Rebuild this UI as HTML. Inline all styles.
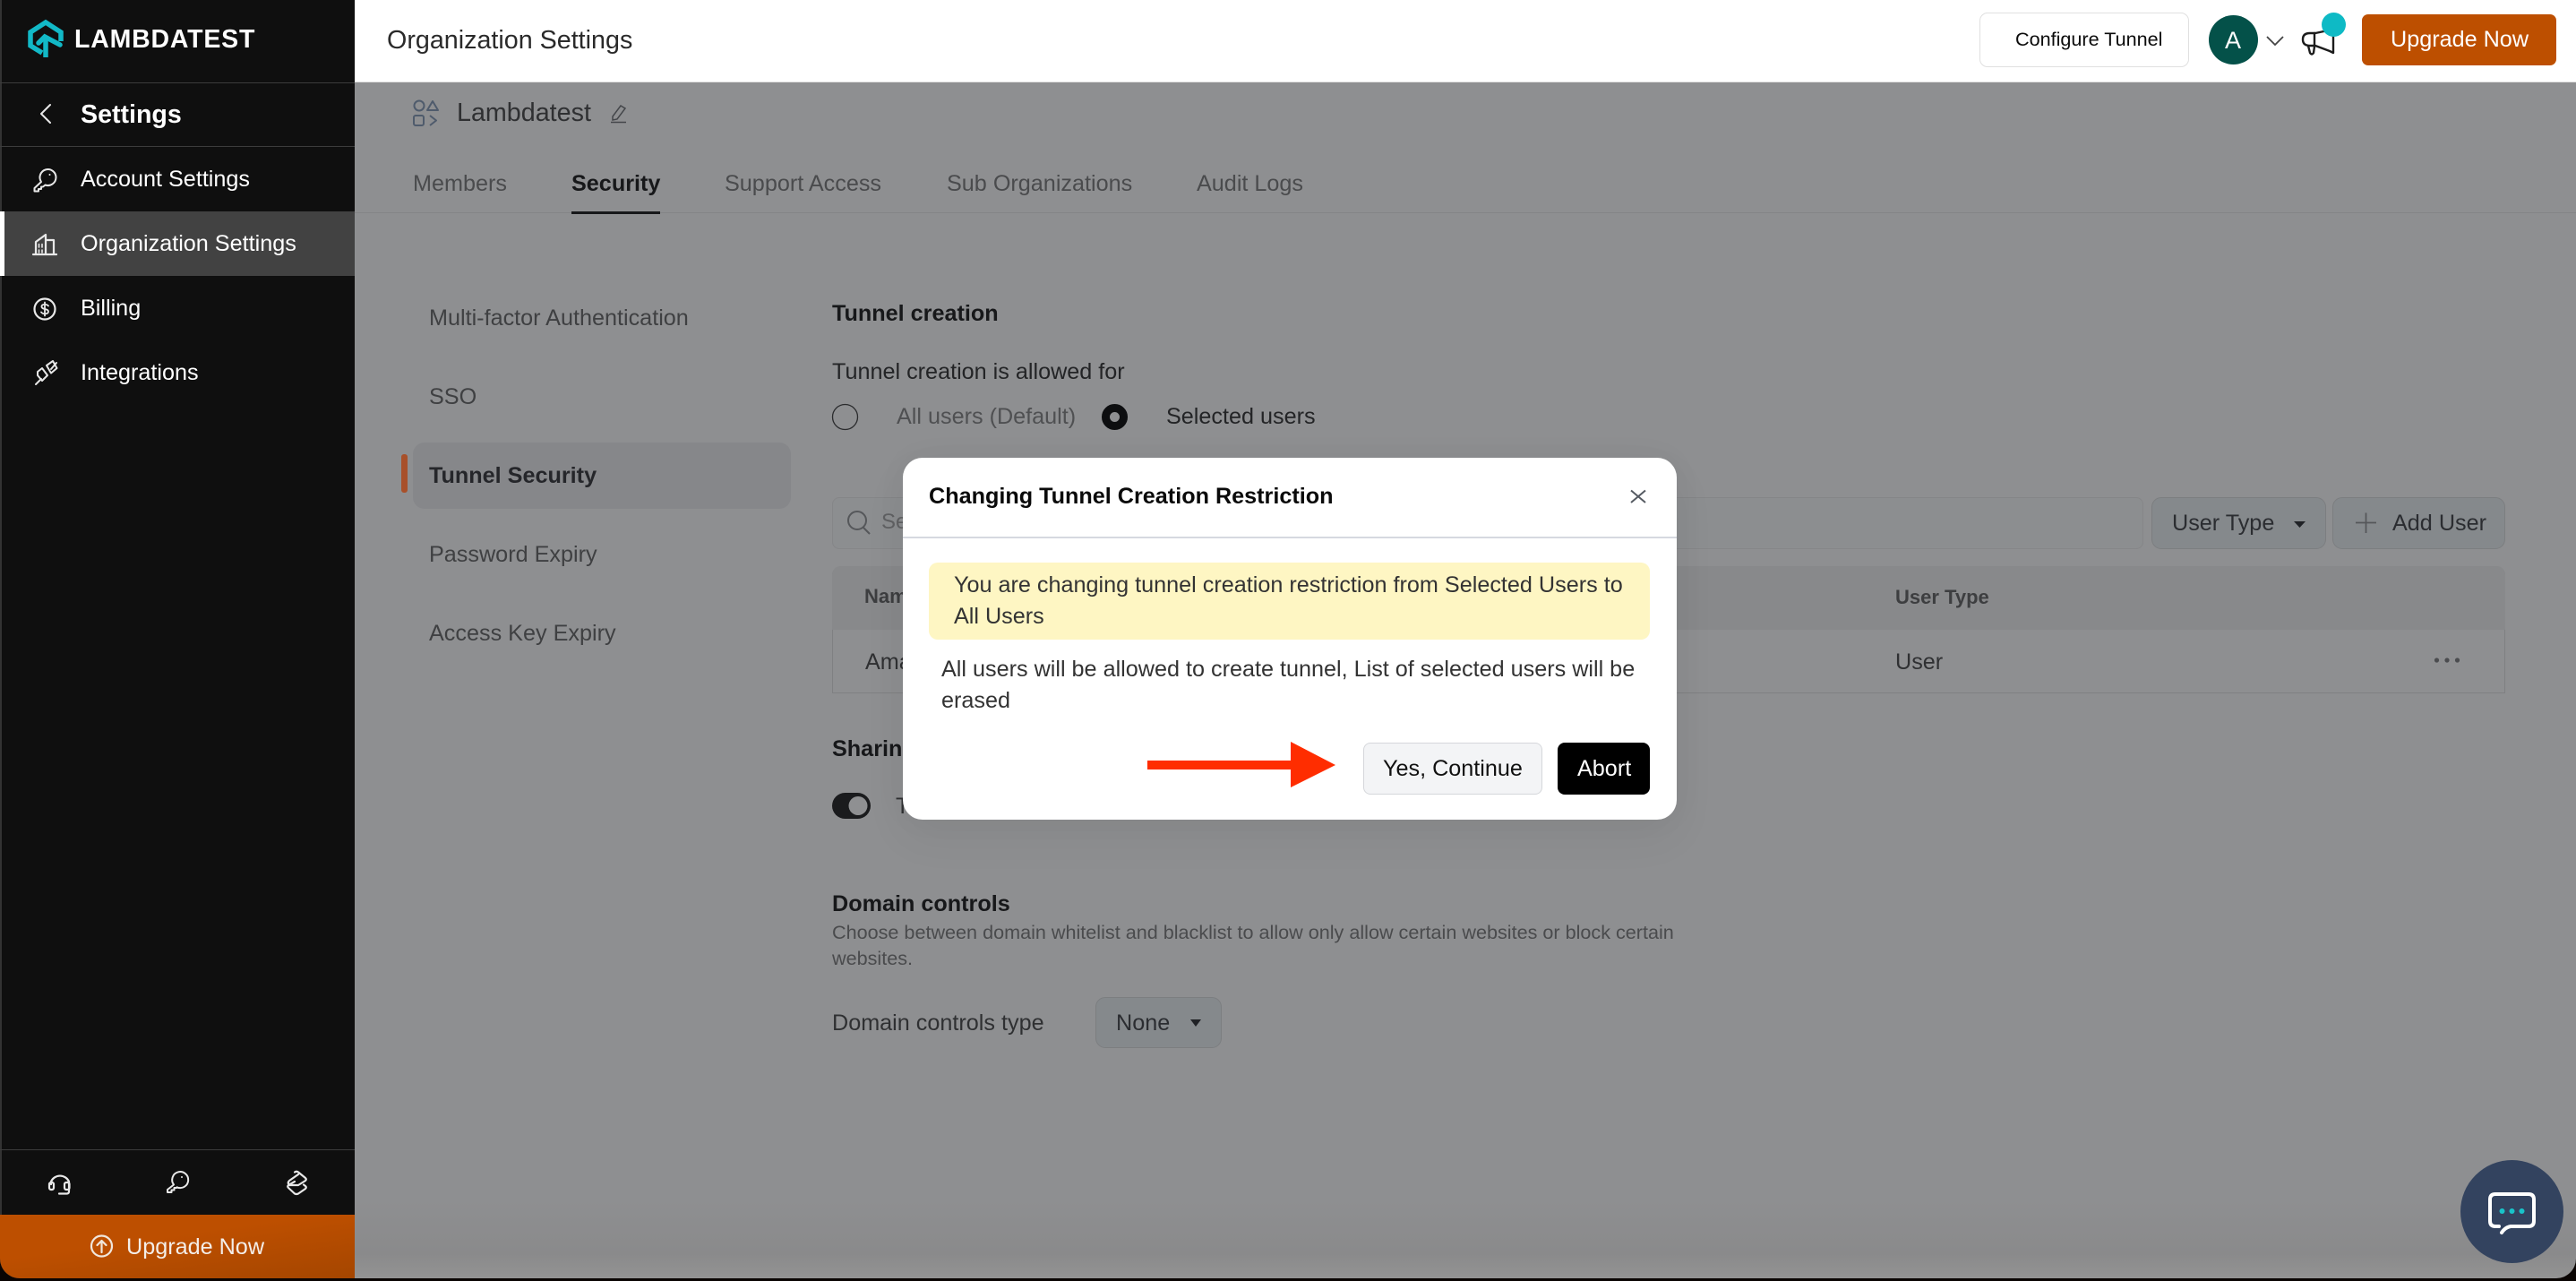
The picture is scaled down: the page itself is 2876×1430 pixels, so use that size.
<!DOCTYPE html>
<html lang="en">
<head>
<meta charset="utf-8">
<title>Organization Settings</title>
<style>
*{box-sizing:border-box}
html,body{margin:0;padding:0;width:2876px;height:1430px;overflow:hidden;background:#0a0503;font-family:"Liberation Sans",Arial,sans-serif}
#win{position:absolute;left:0;top:0;width:2876px;height:1427px;border-radius:0 0 22px 22px;overflow:hidden;background:linear-gradient(#8e8f91 0,#8e8f91 1340px,#8a8a8b 1400px,#939393 1427px)}
.b{position:absolute}
.t{position:absolute;white-space:nowrap;line-height:40px;height:40px;font-size:25.2px;color:#37383a}
.bd{font-weight:700}
.w{color:#fff}
svg{position:absolute;left:0;top:0;z-index:20;pointer-events:none}
#modal{position:absolute;left:1008px;top:511px;width:864px;height:404px;background:#fff;border-radius:22px;box-shadow:0 20px 50px rgba(0,0,0,.05),0 0 40px rgba(0,0,0,.03);z-index:10}
</style>
</head>
<body>
<div id="win">
  <!-- sidebar -->
  <div class="b" style="left:0;top:0;width:396px;height:1427px;background:#0f0f0f"></div>
  <div class="b" style="left:0;top:0;width:2px;height:1427px;background:#333"></div>
  <div class="b" style="left:0;top:92px;width:396px;height:1px;background:#3c3c3c"></div>
  <div class="b" style="left:0;top:163px;width:396px;height:1px;background:#3c3c3c"></div>
  <div class="b" style="left:0;top:236px;width:396px;height:72px;background:#424242"></div>
  <div class="b" style="left:0;top:236px;width:5px;height:72px;background:#fff"></div>
  <div class="b" style="left:0;top:1283px;width:396px;height:1px;background:#3c3c3c"></div>
  <div class="b" style="left:0;top:1356px;width:396px;height:71px;background:linear-gradient(172deg,#bd4f00 40%,#a54600 100%)"></div>

  <span class="t bd w" style="left:83px;top:24px;font-size:28.5px;letter-spacing:.8px">LAMBDATEST</span>
  <span class="t bd w" style="left:90px;top:108px;font-size:28.6px">Settings</span>
  <span class="t w" style="left:90px;top:180px">Account Settings</span>
  <span class="t w" style="left:90px;top:252px">Organization Settings</span>
  <span class="t w" style="left:90px;top:324px">Billing</span>
  <span class="t w" style="left:90px;top:396px">Integrations</span>
  <span class="t" style="left:141px;top:1372px;color:#f4eee9">Upgrade Now</span>

  <!-- header -->
  <div class="b" style="left:396px;top:0;width:2480px;height:92px;background:#fff;border-bottom:1px solid #e2e2e2"></div>
  <span class="t" style="left:432px;top:25px;font-size:28.7px;color:#2a2a2a">Organization Settings</span>
  <div class="b" style="left:2210px;top:14px;width:234px;height:61px;border:1px solid #e0e0e0;border-radius:9px;background:#fff"></div>
  <span class="t" style="left:2250px;top:24px;font-size:21.6px;color:#0c0c0c">Configure Tunnel</span>
  <div class="b" style="left:2466px;top:17px;width:55px;height:55px;border-radius:50%;background:#045149"></div>
  <span class="t w" style="left:2484px;top:25px;font-size:27px">A</span>
  <div class="b" style="left:2637px;top:16px;width:217px;height:57px;border-radius:7px;background:#bd4f00"></div>
  <span class="t w" style="left:2669px;top:24px">Upgrade Now</span>

  <!-- org row -->
  <span class="t" style="left:510px;top:106px;font-size:28.7px;color:#2f3032">Lambdatest</span>

  <!-- tabs -->
  <div class="b" style="left:396px;top:237px;width:2480px;height:1px;background:#838486"></div>
  <div class="b" style="left:638px;top:236px;width:99px;height:3px;background:#17181a"></div>
  <span class="t" style="left:461px;top:185px;color:#4a4b4d">Members</span>
  <span class="t bd" style="left:638px;top:185px;color:#17181a">Security</span>
  <span class="t" style="left:809px;top:185px;color:#4a4b4d">Support Access</span>
  <span class="t" style="left:1057px;top:185px;color:#4a4b4d">Sub Organizations</span>
  <span class="t" style="left:1336px;top:185px;color:#4a4b4d">Audit Logs</span>

  <!-- left nav -->
  <div class="b" style="left:461px;top:494px;width:422px;height:74px;border-radius:13px;background:#86878a"></div>
  <div class="b" style="left:448px;top:507px;width:7px;height:43px;border-radius:3px;background:#a8502a"></div>
  <span class="t" style="left:479px;top:335px;color:#3f4042">Multi-factor Authentication</span>
  <span class="t" style="left:479px;top:423px;color:#3f4042">SSO</span>
  <span class="t bd" style="left:479px;top:511px;color:#25262a">Tunnel Security</span>
  <span class="t" style="left:479px;top:599px;color:#3f4042">Password Expiry</span>
  <span class="t" style="left:479px;top:687px;color:#3f4042">Access Key Expiry</span>

  <!-- tunnel creation -->
  <span class="t bd" style="left:929px;top:330px;color:#17181a">Tunnel creation</span>
  <span class="t" style="left:929px;top:395px;color:#232426">Tunnel creation is allowed for</span>
  <span class="t" style="left:1001px;top:445px;color:#4f5052">All users (Default)</span>
  <span class="t" style="left:1302px;top:445px;color:#232426">Selected users</span>

  <!-- search and buttons -->
  <div class="b" style="left:929px;top:555px;width:1464px;height:58px;border:1px solid #858688;border-radius:8px;background:#8c8e90"></div>
  <span class="t" style="left:984px;top:563px;font-size:24px;color:#606163">Search</span>
  <div class="b" style="left:2402px;top:555px;width:195px;height:58px;border:1px solid #7c7e80;border-radius:11px;background:#85898c"></div>
  <span class="t" style="left:2425px;top:564px;color:#2b2d31">User Type</span>
  <div class="b" style="left:2604px;top:555px;width:193px;height:58px;border:1px solid #7c7e80;border-radius:11px;background:#85898c"></div>
  <span class="t" style="left:2671px;top:564px;color:#2b2d31">Add User</span>

  <!-- table -->
  <div class="b" style="left:929px;top:632px;width:1868px;height:142px;border:1px solid #7f8082;border-top:0;border-radius:10px 10px 0 0;background:#8e8f91"></div>
  <div class="b" style="left:929px;top:632px;width:1868px;height:71px;border-radius:10px 10px 0 0;background:#88898b"></div>
  <span class="t bd" style="left:965px;top:646px;font-size:22px;color:#3d3e40">Name</span>
  <span class="t" style="left:966px;top:719px;color:#2f3032">Amar</span>
  <span class="t bd" style="left:2116px;top:647px;font-size:22px;color:#3d3e40">User Type</span>
  <span class="t" style="left:2116px;top:719px;color:#2f3032">User</span>

  <!-- sharing -->
  <span class="t bd" style="left:929px;top:816px;color:#17181a">Sharing</span>
  <span class="t" style="left:1000px;top:880px;color:#2f3032">Tunnel</span>

  <!-- domain -->
  <span class="t bd" style="left:929px;top:989px;color:#17181a">Domain controls</span>
  <span class="t" style="left:929px;top:1021px;font-size:21.6px;color:#4a4b4d">Choose between domain whitelist and blacklist to allow only allow certain websites or block certain</span>
  <span class="t" style="left:929px;top:1050px;font-size:21.6px;color:#4a4b4d">websites.</span>
  <span class="t" style="left:929px;top:1122px;color:#2f3032">Domain controls type</span>
  <div class="b" style="left:1223px;top:1113px;width:141px;height:57px;border:1px solid #7c7e80;border-radius:11px;background:#85898c"></div>
  <span class="t" style="left:1246px;top:1122px;color:#2b2d31">None</span>

  <!-- modal -->
  <div id="modal">
    <div class="b" style="left:0;top:88px;width:864px;height:2px;background:#d6d9e0"></div>
    <div class="b" style="left:29px;top:117px;width:805px;height:86px;border-radius:10px;background:#fef6c3"></div>
    <span class="t bd" style="left:29px;top:23px;color:#0a0a0a">Changing Tunnel Creation Restriction</span>
    <span class="t" style="left:57px;top:122px;color:#333">You are changing tunnel creation restriction from Selected Users to</span>
    <span class="t" style="left:57px;top:157px;color:#333">All Users</span>
    <span class="t" style="left:43px;top:216px;color:#333">All users will be allowed to create tunnel, List of selected users will be</span>
    <span class="t" style="left:43px;top:251px;color:#333">erased</span>
    <div class="b" style="left:514px;top:318px;width:200px;height:58px;border:1px solid #d5d7db;border-radius:8px;background:#f3f4f6"></div>
    <span class="t" style="left:536px;top:327px;color:#111">Yes, Continue</span>
    <div class="b" style="left:731px;top:318px;width:103px;height:58px;border-radius:8px;background:#000"></div>
    <span class="t w" style="left:753px;top:327px">Abort</span>
  </div>

  <!-- chat -->
  <div class="b" style="left:2747px;top:1295px;width:115px;height:115px;border-radius:50%;background:#33435f;z-index:11"></div>

  <svg width="2876" height="1430" viewBox="0 0 2876 1430" fill="none">
    <!-- logo -->
    <g stroke="#12b9c7" stroke-width="5.5" stroke-linejoin="miter">
      <path d="M47 59L34 51V36L51 25L68 36V46"/>
      <path d="M51 64V41"/>
      <path d="M43 48L50 41L67 50" stroke-linecap="round"/>
    </g>
    <!-- sidebar icons -->
    <g stroke="#e8e8e8" stroke-width="2.2" stroke-linejoin="round" stroke-linecap="round">
      <path d="M56 117L46 127L56 137" stroke-width="2"/>
      <path d="M46 203L38.500 210V213.500H43V211H46V208.500H48L50.500 206.500A9 9 0 1 0 46 203Z" stroke-width="2"/>
      <circle cx="55.500" cy="195" r="1" fill="#e8e8e8" stroke="none"/>
      <path d="M37 284H63M40 284V270L51 262V284M51 268H60V284"/>
      <path d="M43.500 272.500V276M47 272.500V276M43.500 279V282M47 279V282" stroke-width="1.600"/>
      <circle cx="50" cy="345" r="11.500"/>
      <path d="M54 341.500C52.500 339.500 46.500 339 46.500 342.300C46.500 346 54 344 54 347.800C54 351 48 351 46 348.500M50 337.500V352.500" stroke-width="1.800"/>
      <path d="M40 429L46 423M57 412L63 405M52 408L59 403L63.500 411L57 416.500ZM42 415L47 411L53 419L47 425L42 419Z" stroke-width="2"/>
      <!-- bottom icons -->
      <path d="M57 1322V1319A11 11 0 0 1 77 1319V1330Q77 1332.500 74.500 1332.500H66"/>
      <rect x="55" y="1320" width="5" height="8" rx="2"/>
      <rect x="72" y="1320" width="5.500" height="8" rx="2"/>
      <path d="M194 1322.500L187 1328V1331H191.500V1328.500H194.500V1326H197L197.500 1325.300A9 9 0 1 0 194 1322.500Z" stroke-width="2"/>
      <circle cx="203" cy="1314" r="1" fill="#e8e8e8" stroke="none"/>
      <path d="M329 1308.500Q331 1307 333 1308.500L341 1315Q342.500 1316.500 341 1318L333 1323H323Q320.500 1320.500 323 1318L333 1311"/>
      <path d="M339 1322.500L341 1324Q342.500 1325.500 341 1327L333 1332.500Q331 1333.500 329 1332.500L322 1326Q320.500 1324.500 322 1323L329 1319"/>
      <circle cx="113.500" cy="1391" r="11.500" stroke="#f0e6dc"/>
      <path d="M113.500 1398V1385M108.500 1390L113.500 1385L118.500 1390" stroke="#f0e6dc"/>
    </g>
    <!-- header icons -->
    <path d="M2531 41L2540 50L2549 41" stroke="#444" stroke-width="1.800"/>
    <g stroke="#1c1c1c" stroke-width="2.400" stroke-linejoin="round" stroke-linecap="round">
      <path d="M2604 33L2585 37H2579Q2571 37 2571 44Q2571 51 2579 51H2585L2601 57L2605 59V36"/>
      <path d="M2584 37V51M2577 51L2579 59Q2581 62 2583 59L2584 52"/>
    </g>
    <circle cx="2605.500" cy="27.500" r="13.500" fill="#0ebac5"/>
    <!-- org icon -->
    <g stroke="#4f5b6c" stroke-width="2" stroke-linejoin="round">
      <circle cx="468" cy="118" r="5.500"/>
      <path d="M483 113L489 123H477Z"/>
      <rect x="462" y="129" width="11" height="11" rx="2"/>
      <path d="M480 129L487 134.500L480 140"/>
    </g>
    <path d="M684 130L693 118L698 121L689 133L684 134Z M682 136.500H699" stroke="#44464a" stroke-width="1.500"/>
    <!-- radios -->
    <circle cx="943.500" cy="465.500" r="14" stroke="#2a2b2d" stroke-width="1.300"/>
    <circle cx="1244.500" cy="465.500" r="10" stroke="#0d0e10" stroke-width="9"/>
    <!-- search -->
    <circle cx="957" cy="581" r="10" stroke="#55575a" stroke-width="2"/>
    <path d="M964 589L971 596" stroke="#55575a" stroke-width="2"/>
    <!-- carets / plus -->
    <path d="M2561 582H2574L2567.500 589Z" fill="#202226"/>
    <path d="M2630 583.500H2653M2641.500 572.500V595" stroke="#55575a" stroke-width="1.800"/>
    <path d="M1329 1138H1341L1335 1146Z" fill="#202226"/>
    <circle cx="2720.500" cy="737" r="2.600" fill="#4b4c4f"/>
    <circle cx="2732" cy="737" r="2.600" fill="#4b4c4f"/>
    <circle cx="2743.500" cy="737" r="2.600" fill="#4b4c4f"/>
    <!-- toggle -->
    <rect x="929" y="885" width="43" height="29" rx="14.500" fill="#1a1b1d"/>
    <circle cx="958" cy="899.500" r="10.500" fill="#8f9092"/>
    <!-- modal close -->
    <path d="M1821 547.500L1837 561M1837 547.500L1821 561" stroke="#555a62" stroke-width="2"/>
    <!-- red arrow -->
    <path d="M1281 849H1441V828L1491 854L1441 879V859H1281Z" fill="#ff2d00"/>
    <!-- chat bubble -->
    <path d="M2790 1369H2786Q2780 1369 2780 1363V1339Q2780 1333 2786 1333H2823Q2829 1333 2829 1339V1363Q2829 1369 2823 1369H2803Q2797 1370 2793 1376" stroke="#fff" stroke-width="4" stroke-linecap="round" stroke-linejoin="round"/>
    <circle cx="2793.500" cy="1352" r="3" fill="#19c3c9"/>
    <circle cx="2804.500" cy="1352" r="3" fill="#19c3c9"/>
    <circle cx="2815.500" cy="1352" r="3" fill="#19c3c9"/>
  </svg>
</div>
</body>
</html>
